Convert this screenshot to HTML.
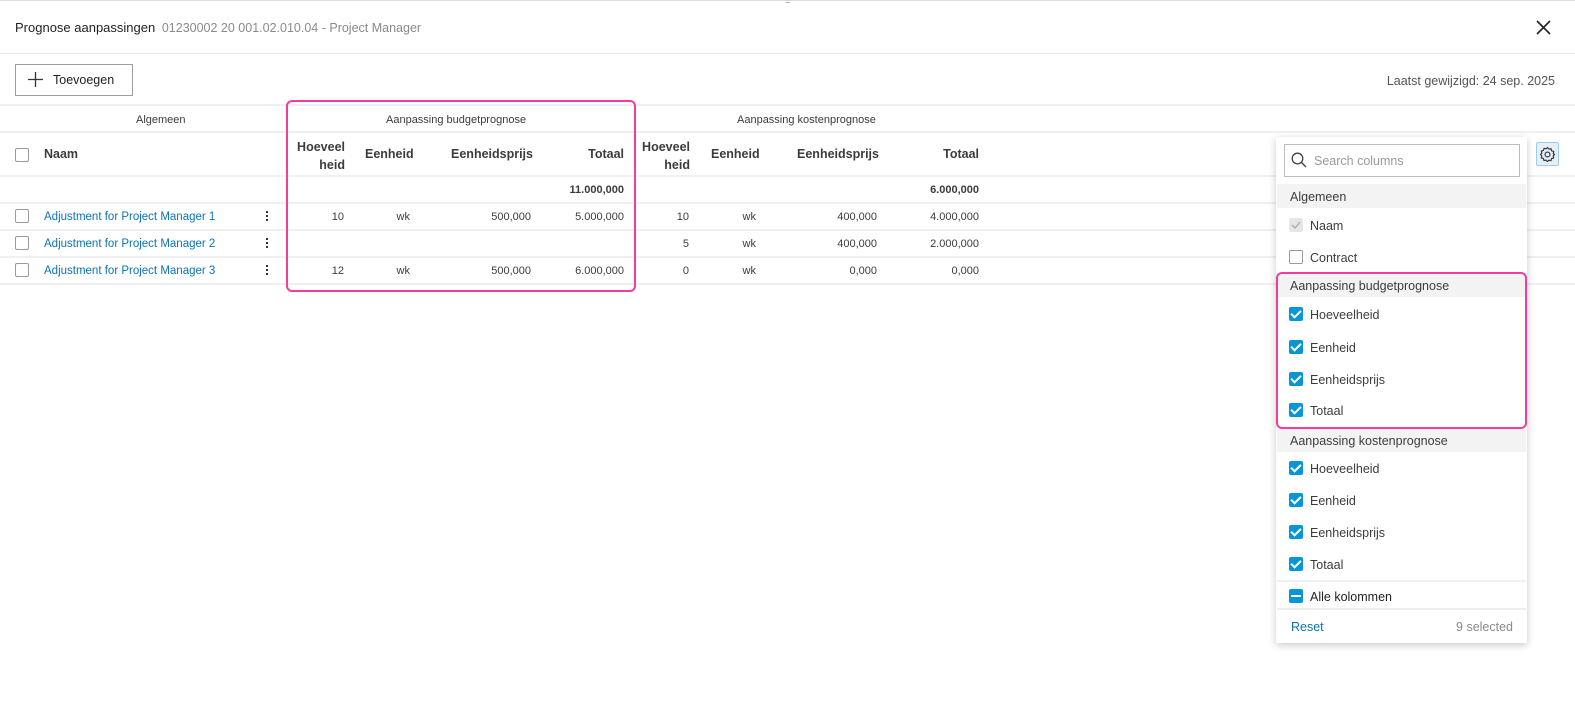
<!DOCTYPE html>
<html><head><meta charset="utf-8"><style>
*{margin:0;padding:0;box-sizing:border-box}
body{width:1575px;height:724px;background:#fff;font-family:"Liberation Sans",sans-serif;color:#3c3c3c;position:relative;overflow:hidden}
.a{position:absolute;white-space:nowrap}
.r{text-align:right}
.hl{position:absolute;left:0;width:1575px;height:2px;background:#f0f0f0}
.s{font-size:11px;margin-top:2px}
.h{font-size:12.5px;font-weight:bold;color:#3c3c3c;margin-top:1px}
.lnk{color:#0a74b5;font-size:11.5px;margin-top:2px}
.mt{margin-top:2px}
.cb{position:absolute;width:14px;height:14px;border:1px solid #9a9a9a;border-radius:2px;background:#fff}
.chk{position:absolute;width:14px;height:14px;border-radius:2px;background:#0696d7}
.chk:after{content:"";position:absolute;left:4px;top:1px;width:4px;height:8px;border:solid #fff;border-width:0 2px 2px 0;transform:rotate(45deg)}
.it{position:absolute;left:1310px;font-size:12.5px;color:#3c3c3c;margin-top:2px}
.sec{position:absolute;left:1277px;width:249px;height:24px;background:#f3f3f3;font-size:12.5px;padding:6px 0 0 13px;color:#3c3c3c}
.dots{position:absolute;left:266px;width:3px}
.dots i{display:block;width:2px;height:2px;background:#333;margin-bottom:2px}
</style></head><body>
<div class="hl" style="top:0;height:1px;background:#ddd"></div>
<div class="a" style="left:785px;top:-4px;font-size:9px;color:#888">=</div>
<div class="a mt" style="left:15px;top:18px;font-size:13px;color:#222">Prognose aanpassingen <span style="color:#8a8a8a;font-size:12.5px;margin-left:3px">01230002 20 001.02.010.04 - Project Manager</span></div>
<svg class="a" style="left:1536px;top:20px" width="15" height="15"><path d="M1 1L14 14M14 1L1 14" stroke="#222" stroke-width="1.6"/></svg>
<div class="hl" style="top:53px;height:1px;background:#e8e8e8"></div>
<div class="a" style="left:15px;top:64px;width:118px;height:32px;border:1px solid #9e9e9e;"></div>
<svg class="a" style="left:28px;top:72px" width="15" height="15"><path d="M7.5 0V15M0 7.5H15" stroke="#333" stroke-width="1.3"/></svg>
<div class="a mt" style="left:53px;top:71px;font-size:12.5px;color:#222">Toevoegen</div>
<div class="a mt" style="right:20px;top:72px;font-size:12.5px;color:#555">Laatst gewijzigd: 24 sep. 2025</div>

<div class="hl" style="top:104px"></div>
<div class="hl" style="top:131px"></div>
<div class="hl" style="top:175px"></div>
<div class="hl" style="top:202px"></div>
<div class="hl" style="top:229px"></div>
<div class="hl" style="top:256px"></div>
<div class="hl" style="top:283px"></div>

<div class="a s" style="left:136px;top:112px">Algemeen</div>
<div class="a s" style="left:386px;top:112px">Aanpassing budgetprognose</div>
<div class="a s" style="left:737px;top:112px">Aanpassing kostenprognose</div>

<div class="cb" style="left:15px;top:148px"></div>
<div class="a h" style="left:44px;top:146px">Naam</div>
<div class="a h r" style="left:280px;width:65px;top:137px;line-height:18px">Hoeveel<br>heid</div>
<div class="a h" style="left:365px;top:146px">Eenheid</div>
<div class="a h r" style="left:430px;width:103px;top:146px">Eenheidsprijs</div>
<div class="a h r" style="left:540px;width:84px;top:146px">Totaal</div>
<div class="a h r" style="left:630px;width:60px;top:137px;line-height:18px">Hoeveel<br>heid</div>
<div class="a h" style="left:711px;top:146px">Eenheid</div>
<div class="a h r" style="left:780px;width:99px;top:146px">Eenheidsprijs</div>
<div class="a h r" style="left:900px;width:79px;top:146px">Totaal</div>

<div class="a r mt" style="left:540px;width:84px;top:182px;font-size:11px;font-weight:bold">11.000,000</div>
<div class="a r mt" style="left:900px;width:79px;top:182px;font-size:11px;font-weight:bold">6.000,000</div>

<div class="cb" style="left:15px;top:209px"></div>
<div class="a lnk" style="left:44px;top:209px">Adjustment for Project Manager 1</div>
<div class="dots" style="top:211px"><i></i><i></i><i></i></div>
<div class="a s r" style="left:280px;width:64px;top:209px">10</div>
<div class="a s r" style="left:360px;width:50px;top:209px">wk</div>
<div class="a s r" style="left:430px;width:101px;top:209px">500,000</div>
<div class="a s r" style="left:540px;width:84px;top:209px">5.000,000</div>
<div class="a s r" style="left:630px;width:59px;top:209px">10</div>
<div class="a s r" style="left:700px;width:56px;top:209px">wk</div>
<div class="a s r" style="left:780px;width:97px;top:209px">400,000</div>
<div class="a s r" style="left:900px;width:79px;top:209px">4.000,000</div>

<div class="cb" style="left:15px;top:236px"></div>
<div class="a lnk" style="left:44px;top:236px">Adjustment for Project Manager 2</div>
<div class="dots" style="top:238px"><i></i><i></i><i></i></div>
<div class="a s r" style="left:630px;width:59px;top:236px">5</div>
<div class="a s r" style="left:700px;width:56px;top:236px">wk</div>
<div class="a s r" style="left:780px;width:97px;top:236px">400,000</div>
<div class="a s r" style="left:900px;width:79px;top:236px">2.000,000</div>

<div class="cb" style="left:15px;top:263px"></div>
<div class="a lnk" style="left:44px;top:263px">Adjustment for Project Manager 3</div>
<div class="dots" style="top:265px"><i></i><i></i><i></i></div>
<div class="a s r" style="left:280px;width:64px;top:263px">12</div>
<div class="a s r" style="left:360px;width:50px;top:263px">wk</div>
<div class="a s r" style="left:430px;width:101px;top:263px">500,000</div>
<div class="a s r" style="left:540px;width:84px;top:263px">6.000,000</div>
<div class="a s r" style="left:630px;width:59px;top:263px">0</div>
<div class="a s r" style="left:700px;width:56px;top:263px">wk</div>
<div class="a s r" style="left:780px;width:97px;top:263px">0,000</div>
<div class="a s r" style="left:900px;width:79px;top:263px">0,000</div>

<div class="a" style="left:286px;top:100px;width:350px;height:192px;border:2px solid #f23d9a;border-radius:6px"></div>

<div class="a" style="left:1276px;top:137px;width:251px;height:506px;background:#fff;box-shadow:0 2px 8px rgba(0,0,0,.22);border-radius:2px"></div>
<div class="a" style="left:1284px;top:144px;width:236px;height:33px;border:1px solid #bdbdbd"></div>
<svg class="a" style="left:1291px;top:152px" width="16" height="16"><circle cx="6.5" cy="6.5" r="5.3" fill="none" stroke="#444" stroke-width="1.3"/><path d="M10.5 10.5L15 15" stroke="#444" stroke-width="1.4"/></svg>
<div class="a mt" style="left:1314px;top:152px;font-size:12.5px;color:#9a9a9a">Search columns</div>
<div class="sec" style="top:184px">Algemeen</div>
<div class="a" style="left:1289px;top:218px;width:14px;height:14px;background:#e6e6e6;border-radius:2px"></div>
<svg class="a" style="left:1291px;top:220px" width="10" height="10"><path d="M1 5L4 8L9 2" stroke="#aaa" stroke-width="1.3" fill="none"/></svg>
<div class="it" style="top:217px">Naam</div>
<div class="cb" style="left:1289px;top:250px"></div>
<div class="it" style="top:249px">Contract</div>
<div class="sec" style="top:273px">Aanpassing budgetprognose</div>
<div class="chk" style="left:1289px;top:307px"></div><div class="it" style="top:306px">Hoeveelheid</div>
<div class="chk" style="left:1289px;top:340px"></div><div class="it" style="top:339px">Eenheid</div>
<div class="chk" style="left:1289px;top:372px"></div><div class="it" style="top:371px">Eenheidsprijs</div>
<div class="chk" style="left:1289px;top:403px"></div><div class="it" style="top:402px">Totaal</div>
<div class="sec" style="top:428px">Aanpassing kostenprognose</div>
<div class="chk" style="left:1289px;top:461px"></div><div class="it" style="top:460px">Hoeveelheid</div>
<div class="chk" style="left:1289px;top:493px"></div><div class="it" style="top:492px">Eenheid</div>
<div class="chk" style="left:1289px;top:525px"></div><div class="it" style="top:524px">Eenheidsprijs</div>
<div class="chk" style="left:1289px;top:557px"></div><div class="it" style="top:556px">Totaal</div>
<div class="a" style="left:1277px;top:580px;width:249px;height:2px;background:#f0f0f0"></div>
<div class="a" style="left:1289px;top:589px;width:14px;height:14px;background:#0696d7;border-radius:2px"></div>
<div class="a" style="left:1291px;top:595px;width:10px;height:2px;background:#fff"></div>
<div class="it" style="top:588px;color:#222">Alle kolommen</div>
<div class="a" style="left:1277px;top:608px;width:249px;height:2px;background:#eee"></div>
<div class="a mt" style="left:1291px;top:618px;font-size:12.5px;color:#0a74b5">Reset</div>
<div class="a mt" style="right:62px;top:618px;font-size:12.5px;color:#8a8a8a">9 selected</div>
<div class="a" style="left:1276px;top:272px;width:251px;height:157px;border:2px solid #f23d9a;border-radius:6px"></div>

<div class="a" style="left:1536px;top:142px;width:23px;height:24px;background:#e4eff7;border:1px solid #9ecbea;border-radius:2px"></div>
<svg class="a" style="left:1539px;top:146px" width="17" height="17" viewBox="0 0 24 24"><path d="M12 2l2 2.5 3-.7.8 3 3 .9-.7 3L22 12l-2 2 .7 3-3 .8-.8 3-3-.7L12 22l-2-2.1-3 .7-.8-3-3-.8.7-3L2 12l2-1.9-.7-3 3-.9.8-3 3 .7z" fill="none" stroke="#333" stroke-width="1.6" stroke-linejoin="round"/><circle cx="12" cy="12" r="3.5" fill="none" stroke="#333" stroke-width="1.6"/></svg>
</body></html>
